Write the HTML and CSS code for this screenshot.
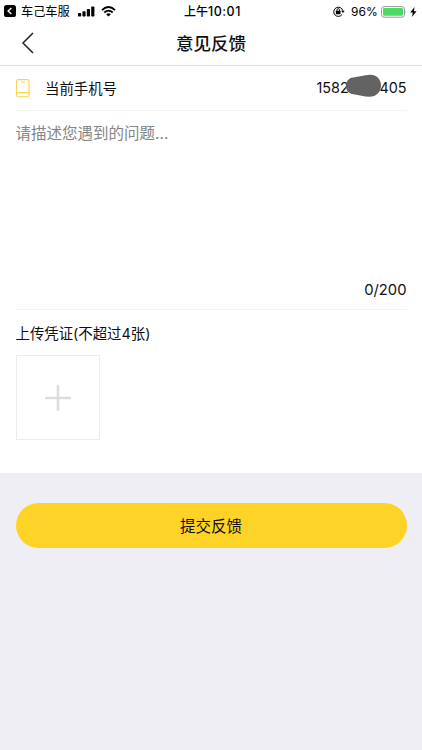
FILE: index.html
```html
<!DOCTYPE html>
<html lang="zh-CN">
<head>
<meta charset="utf-8">
<title>意见反馈</title>
<link rel="stylesheet" href="styles.css">
</head>
<body>
<header class="top">
  <div class="status">
    <div class="status-left">
      <svg class="app-back" width="12" height="12" viewBox="0 0 12 12"><rect width="12" height="12" rx="2.6" fill="#000"/><path d="M7.4 3 4.1 6l3.3 3" fill="none" stroke="#fff" stroke-width="1.4"/></svg>
      <span class="carrier">车己车服</span>
      <svg class="signal" width="17" height="11" viewBox="0 0 17 11"><rect x="0" y="7" width="3.2" height="3.5" rx=".8"/><rect x="4.4" y="5.3" width="3.2" height="5.2" rx=".8"/><rect x="8.8" y="3" width="3.2" height="7.5" rx=".8"/><rect x="13.2" y=".5" width="3.2" height="10" rx=".8"/></svg>
      <svg class="wifi" width="15" height="11" viewBox="0 0 15 11"><path d="M1 4.1Q7.5-2 14 4.1" fill="none" stroke="#000" stroke-width="1.9"/><path d="M3.3 6.5q4.2-3.8 8.4 0" fill="none" stroke="#000" stroke-width="1.8"/><path d="M5.1 8.2q2.4-2 4.8 0L7.5 10.6z"/></svg>
    </div>
    <div class="time">上午<span class="clock">10:01</span></div>
    <div class="status-right">
      <svg class="lock" width="12" height="11" viewBox="0 0 12 11"><path d="M9 8.6A4.6 4.6 0 1 1 9.8 4.600" fill="none" stroke="#000" stroke-width="1"/><path d="M8.1 4.8h3.6L9.9 7.1z"/><rect x="2.9" y="4.8" width="4.6" height="3.5" rx=".4"/><path d="M3.9 5V3.9a1.3 1.3 0 0 1 2.6 0V5" fill="none" stroke="#000" stroke-width=".9"/></svg>
      <span class="percent">96%</span>
      <svg class="battery" width="26" height="12" viewBox="0 0 26 12"><rect x=".5" y=".6" width="23" height="10.6" rx="2.6" fill="#fff" stroke="#999"/><rect x="2" y="2.1" width="20" height="7.6" rx="1.2" fill="#4cd964"/><path d="M24.7 4.2q1.2 1.7 0 3.4z" fill="#999"/></svg>
      <svg class="bolt" width="7" height="10" viewBox="0 0 7 10"><path d="M4.6 0 .2 5.6h2.7L1.8 10l4.8-5.8H3.8z"/></svg>
    </div>
  </div>
  <nav class="nav">
    <svg class="back" width="14" height="22" viewBox="0 0 14 22"><path d="M12 1 2 11l10 10" fill="none" stroke="#222" stroke-width="1.5"/></svg>
    <h1>意见反馈</h1>
  </nav>
</header>
<main>
  <section class="phone-row">
    <svg class="phone-icon" width="14" height="19" viewBox="0 0 14 19"><rect x=".6" y=".6" width="12.4" height="17.2" rx="1.8" fill="none" stroke="#fcd34f" stroke-width="1.1"/><path d="M.6 13.6H13M5 3h3.8" fill="none" stroke="#fcd34f" stroke-width="1.1"/></svg>
    <span class="label">当前手机号</span>
    <span class="number"><span>1582</span><span>405</span>
      <svg class="mask" width="37" height="24" viewBox="0 0 37 24"><path d="M8 3.4C14 3.2 19 .8 25 .8c6.8 0 11 4.7 11 10.7 0 6.5-5 11.3-11.5 11.3-6 0-10-2-16-2.6C3.5 19.7 1 16.5 1 12c0-4.6 2.700-8.2 7-8.6z" fill="#636363"/></svg>
    </span>
  </section>
  <section class="description">
    <p class="placeholder">请描述您遇到的问题...</p>
    <p class="count">0/200</p>
  </section>
  <section class="upload">
    <h2>上传凭证(不超过4张)</h2>
    <div class="add"><svg width="26" height="26" viewBox="0 0 26 26"><path d="M13 1.2v23.6M1.2 13h23.6" stroke="#ddd" stroke-width="2.6" stroke-linecap="round"/></svg></div>
  </section>
</main>
<button class="submit" type="button">提交反馈</button>
</body>
</html>
```
FILE: styles.css
```css
* { box-sizing: border-box; margin: 0; padding: 0; }
body {
  width: 422px;
  height: 750px;
  overflow: hidden;
  background: #efeef4;
  color: #111;
  font-family: Inter, "Noto Sans CJK SC", sans-serif;
}
svg { display: block; flex: none; }
.top { height: 66px; background: #fff; border-bottom: 1px solid #dfdfe1; }
.status {
  display: grid;
  grid-template-columns: 1fr auto 1fr;
  height: 22px;
  align-items: center;
  font-size: 12.2px;
  line-height: 22px;
  color: #000;
}
.status-left, .status-right { display: flex; align-items: center; }
.status-left { padding-left: 4px; }
.app-back { margin-top: -1px; }
.carrier { margin-left: 5px; padding-top: 1px; width: 57px; white-space: nowrap; }
.signal { margin-top: -1px; }
.wifi { margin-left: 6px; margin-top: -1px; }
.time { padding: 1px 0 0 2px; font-weight: 500; font-size: 12px; width: 58px; white-space: nowrap; }
.clock { font-size: 12.5px; letter-spacing: .5px; }
.status-right { justify-content: flex-end; padding-right: 5px; }
.lock { margin-top: -1px; }
.percent { margin-left: 6px; width: 27px; font-size: 12px; white-space: nowrap; }
.battery { margin-left: 3px; }
.bolt { margin-left: 3px; }
.nav { display: grid; grid-template-columns: 52px 1fr 52px; height: 42px; align-items: center; }
.back { margin-left: 21px; }
.nav h1 { padding-top: 2px; font-size: 17.5px; font-weight: 500; line-height: 26px; text-align: center; }
main { height: 407px; padding: 0 15.5px; background: #fff; }
.phone-row { display: flex; align-items: center; height: 45px; border-bottom: 1px solid #f4f4f4; }
.label { margin: -2px 0 0 15.5px; font-size: 14.4px; }
.number {
  position: relative;
  display: flex;
  justify-content: space-between;
  width: 90px;
  margin: -1px 0 0 auto;
  font-size: 14.4px;
}
.mask { position: absolute; left: 28px; top: -5px; }
.description {
  display: flex;
  flex-direction: column;
  justify-content: space-between;
  height: 199px;
  padding: 11px 0 9px;
  border-bottom: 1px solid #f2f2f2;
}
.placeholder { font-size: 15.5px; line-height: 23px; color: #858585; }
.count { font-size: 14.8px; line-height: 20px; text-align: right; }
.upload h2 { padding-top: 13px; font-size: 14.4px; font-weight: 400; line-height: 22px; }
.add {
  display: flex;
  align-items: center;
  justify-content: center;
  width: 84px;
  height: 85px;
  margin-top: 10px;
  border: 1px solid #ececec;
}
.submit {
  display: block;
  width: 391px;
  height: 45px;
  margin: 30px 15.5px 0;
  padding-top: 2px;
  border: 0;
  border-radius: 23px;
  background: #fdd327;
  color: #111;
  font: 400 15.5px/43px Inter, "Noto Sans CJK SC", sans-serif;
}
```
